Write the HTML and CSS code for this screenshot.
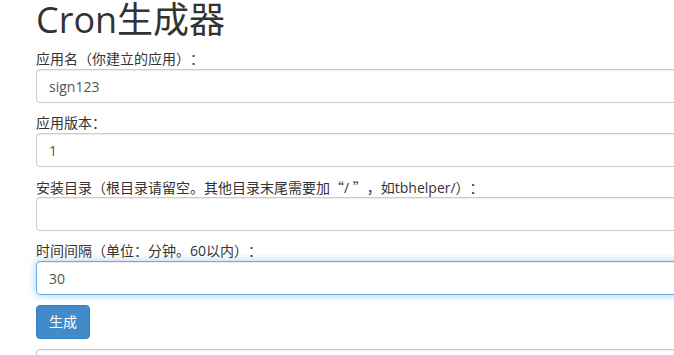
FILE: index.html
```html
<!DOCTYPE html>
<html lang="zh-CN">
<head>
  <meta charset="UTF-8" />
  <title>Cron生成器</title>
  <link rel="stylesheet" href="styles.css">
</head>
<body>
  <div class="container">
    <h1>Cron生成器</h1>
    <form class="cron-form">
      <div class="form-group">
        <label for="appname">应用名（你建立的应用）：</label>
        <input class="form-control" id="appname" type="text" value="sign123">
      </div>
      <div class="form-group">
        <label for="appver">应用版本：</label>
        <input class="form-control" id="appver" type="text" value="1">
      </div>
      <div class="form-group">
        <label for="dir">安装目录（根目录请留空。其他目录末尾需要加<span class="cjk">“</span>/ <span class="cjk">”</span>，如tbhelper/）：</label>
        <input class="form-control" id="dir" type="text" value="">
      </div>
      <div class="form-group">
        <label for="interval">时间间隔（单位：分钟。60以内）：</label>
        <input class="form-control focus" id="interval" type="text" value="30">
      </div>
      <div class="form-group">
        <button class="btn btn-primary" type="button">生成</button>
      </div>
      <textarea class="form-control result" rows="4"></textarea>
    </form>
  </div>
</body>
</html>
```

FILE: styles.css
```css
html, body {
  overflow: hidden;
}

body {
  margin: 0;
  font-family: 'Open Sans', 'Noto Sans CJK SC', sans-serif;
  font-size: 14px;
  line-height: 20px;
  color: #333;
  background: #fff;
  text-spacing-trim: space-all;
}

.container {
  width: 1000px;
  padding-left: 36px;
}

h1 {
  font-size: 36px;
  font-weight: 400;
  line-height: 40px;
  margin: 0 0 9px 0;
  color: #333;
}

.form-group {
  margin-bottom: 10px;
}

label {
  display: block;
  font-weight: normal;
  margin: 0;
  height: 20px;
  white-space: nowrap;
}

.cjk {
  font-family: 'Noto Sans CJK SC', sans-serif;
}

.form-control {
  display: block;
  width: 100%;
  height: 34px;
  padding: 6px 12px;
  box-sizing: border-box;
  font-family: 'Open Sans', 'Noto Sans CJK SC', sans-serif;
  font-size: 14px;
  line-height: 20px;
  color: #555;
  background: #fff;
  border: 1px solid #ccc;
  border-radius: 4px;
  box-shadow: inset 0 1px 1px rgba(0,0,0,0.075);
  outline: none;
}

.form-control.focus {
  border-color: #66afe9;
  box-shadow: inset 0 1px 1px rgba(0,0,0,0.075), 0 0 8px rgba(102,175,233,0.6);
}

.result {
  height: 80px;
  resize: none;
}

.btn {
  display: inline-block;
  height: 34px;
  padding: 6px 12px;
  font-family: 'Open Sans', 'Noto Sans CJK SC', sans-serif;
  font-size: 14px;
  line-height: 20px;
  border-radius: 4px;
  border: 1px solid transparent;
  cursor: pointer;
}

.btn-primary {
  color: #fff;
  background-color: #428bca;
  border-color: #357ebd;
}
```
